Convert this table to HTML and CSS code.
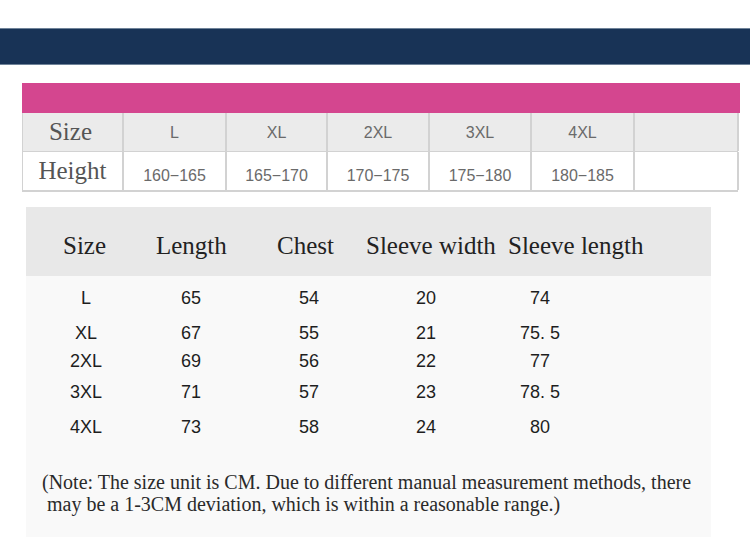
FILE: index.html
```html
<!DOCTYPE html>
<html lang="en">
<head>
<meta charset="utf-8">
<title>Size chart</title>
<link rel="stylesheet" href="styles.css">
</head>
<body>
<div class="page">
  <div class="band"></div>

  <section class="range-table">
    <div class="pink-bar"></div>
    <div class="range-row range-row--size">
      <div class="cell cell--label">Size</div>
      <div class="cell">L</div>
      <div class="cell">XL</div>
      <div class="cell">2XL</div>
      <div class="cell">3XL</div>
      <div class="cell">4XL</div>
      <div class="cell"></div>
    </div>
    <div class="range-row range-row--height">
      <div class="cell cell--label">Height</div>
      <div class="cell">160−165</div>
      <div class="cell">165−170</div>
      <div class="cell">170−175</div>
      <div class="cell">175−180</div>
      <div class="cell">180−185</div>
      <div class="cell"></div>
    </div>
  </section>

  <section class="measure">
    <div class="measure-head">
      <span>Size</span>
      <span>Length</span>
      <span>Chest</span>
      <span>Sleeve width</span>
      <span>Sleeve length</span>
    </div>
    <div class="measure-body">
      <div class="m-row m-row--1"><span>L</span><span>65</span><span>54</span><span>20</span><span>74</span></div>
      <div class="m-row m-row--2"><span>XL</span><span>67</span><span>55</span><span>21</span><span>75. 5</span></div>
      <div class="m-row m-row--3"><span>2XL</span><span>69</span><span>56</span><span>22</span><span>77</span></div>
      <div class="m-row m-row--4"><span>3XL</span><span>71</span><span>57</span><span>23</span><span>78. 5</span></div>
      <div class="m-row m-row--5"><span>4XL</span><span>73</span><span>58</span><span>24</span><span>80</span></div>
      <p class="note">(Note: The size unit is CM. Due to different manual measurement methods, there<br>&nbsp;may be a 1-3CM deviation, which is within a reasonable range.)</p>
    </div>
  </section>
</div>
</body>
</html>
```

FILE: styles.css
```css
* {
  box-sizing: border-box;
}

html, body {
  margin: 0;
  padding: 0;
  background: #ffffff;
}

.page {
  width: 750px;
  height: 557px;
  padding-top: 28px;
  overflow: hidden;
}

.band {
  height: 37px;
  background: #183356;
  border-top: 1px solid #6f8399;
  border-bottom: 1px solid #6f8399;
}

.range-table {
  margin: 18px 0 0 22px;
  width: 718px;
}

.pink-bar {
  height: 30px;
  background: #d4468f;
}

.range-row {
  display: grid;
  grid-template-columns: 101px 103px 101px 102px 102px 103px 104px;
  width: 716px;
  border-left: 1px solid #d2d2d2;
}

.range-row--size {
  height: 39px;
  background: #ebebeb;
  border-bottom: 1px solid #d2d2d2;
}

.range-row--height {
  height: 40px;
  background: #ffffff;
  border-bottom: 2px solid #d2d2d2;
}

.cell {
  display: flex;
  align-items: center;
  justify-content: center;
  border-right: 2px solid #d2d2d2;
  font-family: "Liberation Sans", Arial, sans-serif;
  font-size: 16px;
  color: #6a6a6a;
  padding-top: 2px;
}

.range-row--height .cell {
  padding-top: 9px;
}

.cell--label {
  font-family: "Liberation Serif", "Times New Roman", serif;
  font-size: 25px;
  color: #555555;
  padding-top: 0;
  padding-right: 4px;
}

.range-row--height .cell--label {
  padding-top: 0;
  padding-right: 0;
}

.measure {
  margin: 15px 0 0 26px;
  width: 685px;
  background: #f9f9f9;
}

.measure-head {
  display: grid;
  grid-template-columns: 93px 121px 89px 142px 1fr;
  align-items: center;
  height: 69px;
  padding: 8px 0 0 37px;
  background: #e8e8e8;
  font-family: "Liberation Serif", "Times New Roman", serif;
  font-size: 25px;
  color: #222222;
  white-space: nowrap;
}

.measure-body {
  padding: 0 0 22px 0;
}

.m-row {
  display: grid;
  grid-template-columns: 120px 90px 146px 88px 140px;
  height: 28px;
  align-items: center;
  font-family: "Liberation Sans", Arial, sans-serif;
  font-size: 18px;
  color: #1e1e1e;
  text-align: center;
}

.m-row--1 { margin-top: 8px; }
.m-row--2 { margin-top: 7px; }
.m-row--3 { margin-top: 0; }
.m-row--4 { margin-top: 3px; }
.m-row--5 { margin-top: 7px; }

.note {
  margin: 30px 0 0 16px;
  font-family: "Liberation Serif", "Times New Roman", serif;
  font-size: 20px;
  line-height: 22px;
  color: #2a2a2a;
  white-space: nowrap;
}
```
